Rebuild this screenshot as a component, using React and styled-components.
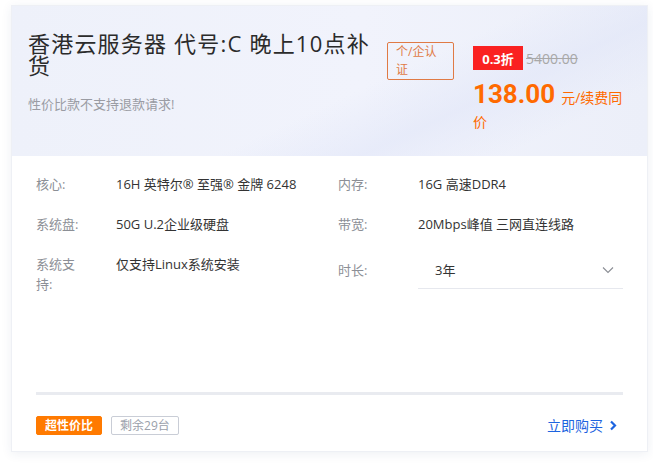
import React from "react"
import styled, { createGlobalStyle } from "styled-components"

const GlobalStyle = createGlobalStyle`
  body {
    margin: 0;
    background: #ffffff;
    font-family: "Open Sans", "Noto Sans CJK SC", sans-serif;
  }
`

const Page = styled.div`
  padding: 5px 5px 16px 11px;
`

const Card = styled.div`
  width: 637px;
  background: #ffffff;
  border: 1px solid #eef0f5;
  box-shadow: 0 2px 10px rgba(40, 60, 120, 0.08);
  box-sizing: border-box;
`

const Head = styled.div`
  height: 150px;
  box-sizing: border-box;
  padding: 26px 16px 0 16px;
  display: flex;
  align-items: flex-start;
  background:
    linear-gradient(155deg, rgba(255, 255, 255, 0) 55%, rgba(225, 230, 248, 0.6) 70%, rgba(255, 255, 255, 0) 85%),
    linear-gradient(90deg, #eef1fa 0%, #f1f3fc 55%, #eceff9 100%);
`

const TitleBox = styled.div`
  width: 346px;
`

const Title = styled.h1`
  margin: 0;
  font-size: 22px;
  line-height: 22px;
  font-weight: 400;
  letter-spacing: 1.2px;
  color: #2b2b2b;
`

const Sub = styled.p`
  margin: 18px 0 0;
  font-size: 13px;
  color: #9a9ca3;
`

const Tag = styled.div`
  margin: 10px 0 0 13px;
  width: 67px;
  height: 38px;
  box-sizing: border-box;
  border: 1px solid #e07a45;
  border-radius: 2px;
  padding: 0 8px;
  font-size: 12px;
  line-height: 18px;
  color: #e07a45;
`

const PriceBox = styled.div`
  margin: 14px 0 0 19px;
  width: 152px;
`

const Discount = styled.div`
  display: flex;
  align-items: center;
  gap: 3px;
`

const Badge = styled.span`
  background: #fa2121;
  color: #ffffff;
  font-weight: 700;
  font-size: 13px;
  width: 50px;
  height: 24px;
  display: flex;
  align-items: center;
  justify-content: center;
`

const Old = styled.span`
  color: #a8a8a8;
  font-size: 14px;
  text-decoration: line-through;
`

const Price = styled.div`
  margin-top: 12px;
  color: #ff6a00;
  font-size: 14px;
  line-height: 24px;
`

const Amount = styled.span`
  font-family: Roboto, sans-serif;
  font-weight: 700;
  font-size: 26px;
  margin-right: 6px;
`

const Body = styled.div`
  padding: 18px 24px 0 24px;
`

const Grid = styled.div`
  display: grid;
  grid-template-columns: 302px 1fr;
  row-gap: 20px;
  height: 218px;
  align-content: start;
`

const Item = styled.div`
  display: flex;
  align-self: start;
  align-items: ${(p) => (p.center ? "center" : "flex-start")};
  font-size: 13px;
  line-height: 20px;
`

const Label = styled.span`
  width: 52px;
  margin-right: 28px;
  color: #8c8f96;
  flex-shrink: 0;
`

const Value = styled.span`
  color: #333333;
`

const Select = styled.div`
  flex: 1;
  height: 38px;
  margin: -3px 0;
  box-sizing: border-box;
  border-bottom: 1px solid #e6e8ee;
  display: flex;
  align-items: center;
  justify-content: space-between;
  padding: 0 9px 0 17px;
  color: #333333;
  font-size: 13px;
`

const Divider = styled.div`
  height: 3px;
  background: #e9ebf0;
`

const Foot = styled.div`
  display: flex;
  align-items: center;
  justify-content: space-between;
  padding: 20px 0 16px;
`

const Tags = styled.div`
  display: flex;
  gap: 9px;
`

const Pill = styled.span`
  height: 19px;
  box-sizing: border-box;
  padding: 0 8px;
  font-size: 12px;
  display: flex;
  align-items: center;
  border-radius: 2px;
  background: ${(p) => (p.hot ? "#ff7a00" : "#ffffff")};
  color: ${(p) => (p.hot ? "#ffffff" : "#9aa0aa")};
  border: 1px solid ${(p) => (p.hot ? "#ff7a00" : "#c9cdd6")};
  font-weight: ${(p) => (p.hot ? 700 : 400)};
`

const Buy = styled.a`
  display: flex;
  align-items: center;
  gap: 6px;
  color: #1d64e0;
  font-size: 14px;
  text-decoration: none;
  margin-right: 6px;
`

const Chevron = () => (
  <svg width="12" height="8" viewBox="0 0 12 8" fill="none">
    <path d="M1 1.5l5 5 5-5" stroke="#8a8d94" strokeWidth="1.1" />
  </svg>
)

const Arrow = () => (
  <svg width="8" height="11" viewBox="0 0 8 11" fill="none">
    <path d="M2 1.5l4 4-4 4" stroke="#1d64e0" strokeWidth="2.2" />
  </svg>
)

export default function App() {
  return (
    <Page>
      <GlobalStyle />
      <Card>
        <Head>
          <TitleBox>
            <Title>香港云服务器 代号:C 晚上10点补货</Title>
            <Sub>性价比款不支持退款请求!</Sub>
          </TitleBox>
          <Tag>个/企认证</Tag>
          <PriceBox>
            <Discount>
              <Badge>0.3折</Badge>
              <Old>5400.00</Old>
            </Discount>
            <Price>
              <Amount>138.00</Amount>元/续费同价
            </Price>
          </PriceBox>
        </Head>
        <Body>
          <Grid>
            <Item>
              <Label>核心:</Label>
              <Value>16H 英特尔® 至强® 金牌 6248</Value>
            </Item>
            <Item>
              <Label>内存:</Label>
              <Value>16G 高速DDR4</Value>
            </Item>
            <Item>
              <Label>系统盘:</Label>
              <Value>50G U.2企业级硬盘</Value>
            </Item>
            <Item>
              <Label>带宽:</Label>
              <Value>20Mbps峰值 三网直连线路</Value>
            </Item>
            <Item>
              <Label>系统支持:</Label>
              <Value>仅支持Linux系统安装</Value>
            </Item>
            <Item center>
              <Label>时长:</Label>
              <Select>
                3年
                <Chevron />
              </Select>
            </Item>
          </Grid>
          <Divider />
          <Foot>
            <Tags>
              <Pill hot>超性价比</Pill>
              <Pill>剩余29台</Pill>
            </Tags>
            <Buy href="#">
              立即购买
              <Arrow />
            </Buy>
          </Foot>
        </Body>
      </Card>
    </Page>
  )
}
